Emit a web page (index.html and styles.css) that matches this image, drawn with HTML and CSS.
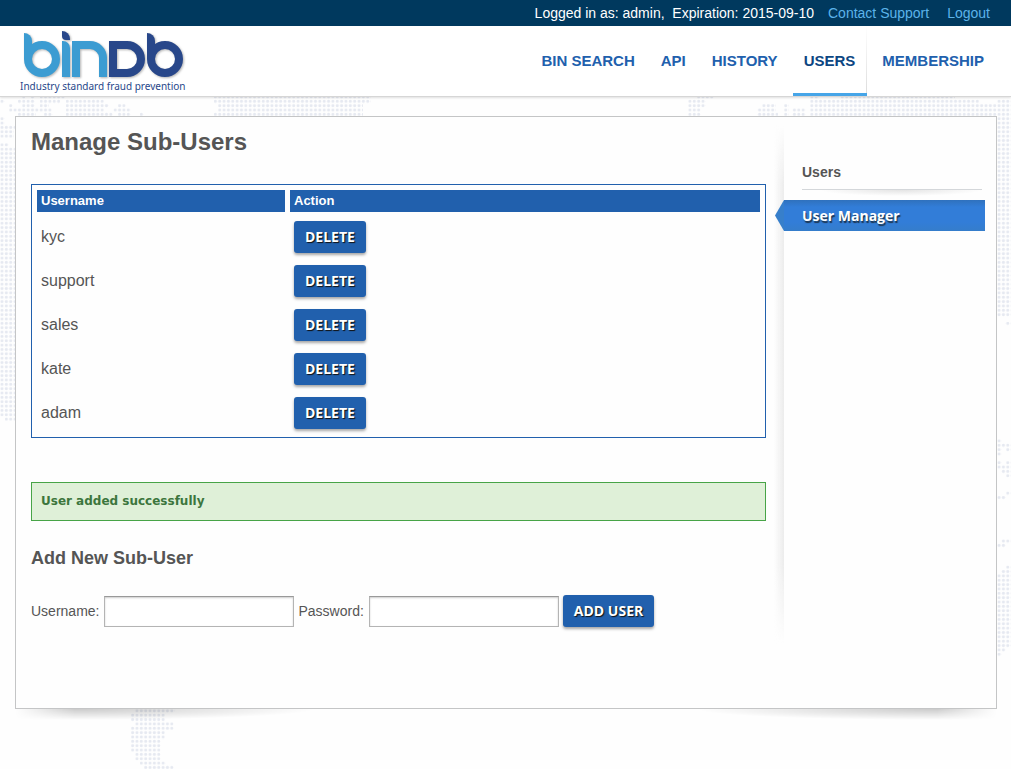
FILE: index.html
```html
<!DOCTYPE html>
<html lang="en">
<head>
<meta charset="utf-8">
<meta name="viewport" content="width=device-width, initial-scale=1">
<title>Manage Sub-Users - binDb</title>
<link rel="stylesheet" href="styles.css">
</head>
<body>
<svg class="world-map" width="1011" height="769" aria-hidden="true">
  <defs>
    <pattern id="dots" x="-0.18" y="99.12" width="4.354" height="4.354" patternUnits="userSpaceOnUse">
      <circle cx="2.177" cy="2.177" r="1.5" fill="#e6e9f1"/>
    </pattern>
  </defs>
  <path fill="url(#dots)" d="M22 95h3v4h-3zM31 95h4v4h-4zM40 95h25v4h-25zM0 99h5v5h-5zM18 99h17v5h-17zM40 99h20v5h-20zM66 99h38v5h-38zM9 104h4v4h-4zM22 104h13v4h-13zM40 104h9v4h-9zM66 104h43v4h-43zM118 104h8v4h-8zM9 108h43v4h-43zM66 108h38v4h-38zM113 108h18v4h-18zM0 117h5v4h-5zM18 112h18v5h-18zM44 112h9v5h-9zM66 112h47v5h-47zM118 112h13v5h-13zM140 112h4v5h-4zM0 121h5v4h-5zM0 125h15v5h-15zM0 130h14v4h-14zM0 134h14v4h-14zM0 143h9v4h-9zM0 147h16v270h-16zM5 417h11v4h-11z"/>
  <path fill="url(#dots)" d="M214 95h157v9h-157zM218 104h145v8h-145zM214 112h149v5h-149z"/>
  <path fill="url(#dots)" d="M697 95h17v4h-17zM688 99h18v5h-18zM688 104h18v4h-18zM688 108h13v9h-13zM762 104h14v4h-14zM757 108h19v5h-19zM784 104h5v13h-5zM757 112h21v5h-21zM792 108h14v9h-14zM810 95h9v22h-9zM840 95h115v4h-115zM819 99h160v18h-160zM979 104h18v13h-18zM997 99h14v10h-14zM997 109h14v208h-14zM1005 322h6v4h-6z"/>
  <path fill="url(#dots)" d="M997 439h5v4h-5zM997 443h14v5h-14zM997 448h5v8h-5zM1006 448h5v4h-5zM997 461h5v4h-5zM1006 461h5v4h-5zM997 465h14v5h-14zM1001 469h10v5h-10zM1006 474h5v4h-5zM1006 491h5v5h-5zM997 496h9v4h-9zM1001 539h10v5h-10zM997 543h9v5h-9zM1006 565h5v5h-5zM1001 570h10v4h-10zM997 574h14v74h-14zM997 648h9v4h-9zM997 652h5v5h-5z"/>
  <path fill="url(#dots)" d="M135 708h40v5h-40zM131 713h34v9h-34zM135 722h39v4h-39zM131 726h43v4h-43zM131 730h34v10h-34zM131 739h30v13h-30zM135 752h26v9h-26zM140 761h26v4h-26zM144 765h30v4h-30z"/>
</svg>

<header class="site-header">
  <div class="top-bar">
    <span class="account">Logged in as: admin,&nbsp; Expiration: 2015-09-10</span>
    <a href="#support">Contact Support</a>
    <a class="logout" href="#logout">Logout</a>
  </div>
  <div class="nav-bar">
    <a class="brand" href="#home">
      <span class="mark" role="img" aria-label="binDb">
        <span class="bowl light"></span>
        <span class="stroke"></span>
        <span class="arch"></span>
        <span class="half"></span>
        <span class="bowl dark"></span>
      </span>
      <span class="tagline">Industry standard fraud prevention</span>
    </a>
    <nav class="main-nav">
      <a href="#search">BIN SEARCH</a>
      <a href="#api">API</a>
      <a href="#history">HISTORY</a>
      <a class="active" href="#users" aria-current="page">USERS</a>
      <a href="#membership">MEMBERSHIP</a>
    </nav>
  </div>
</header>

<div class="panel-wrap">
  <div class="panel">
    <main class="content">
      <h1>Manage Sub-Users</h1>
      <table class="users">
        <thead>
          <tr><th class="name-col" scope="col">Username</th><th scope="col">Action</th></tr>
        </thead>
        <tbody>
          <tr><td>kyc</td><td><button class="btn" type="button">DELETE</button></td></tr>
          <tr><td>support</td><td><button class="btn" type="button">DELETE</button></td></tr>
          <tr><td>sales</td><td><button class="btn" type="button">DELETE</button></td></tr>
          <tr><td>kate</td><td><button class="btn" type="button">DELETE</button></td></tr>
          <tr><td>adam</td><td><button class="btn" type="button">DELETE</button></td></tr>
        </tbody>
      </table>
      <p class="alert" role="status">User added successfully</p>
      <h2>Add New Sub-User</h2>
      <form class="add-form">
        <label for="username">Username:</label>
        <input id="username" type="text" name="username">
        <label for="password">Password:</label>
        <input id="password" type="password" name="password">
        <button class="btn" type="submit">ADD USER</button>
      </form>
    </main>
    <aside class="sidebar">
      <h3>Users</h3>
      <a class="side-link" href="#manager">User Manager</a>
    </aside>
  </div>
</div>
</body>
</html>
```
FILE: styles.css
```css
* {
  box-sizing: border-box;
}

body {
  margin: 0;
  background: #fefefe;
  color: #555;
  font-family: "Liberation Sans", Arial, sans-serif;
  font-size: 14px;
}

a {
  text-decoration: none;
}

/* Dotted map behind the page */
.world-map {
  position: absolute;
  top: 0;
  left: 0;
  z-index: -1;
}

/* Header */
.site-header {
  background: #fff;
  border-bottom: 1px solid #d6d6d6;
  box-shadow: 0 1px 2px rgba(0, 0, 0, 0.12);
}

.top-bar {
  display: flex;
  justify-content: flex-end;
  height: 26px;
  padding-right: 21px;
  background: #00395e;
  line-height: 26px;
}

.top-bar a {
  margin-left: 14px;
  color: #5cb3ea;
}

.top-bar .logout {
  margin-left: 18px;
}

.account {
  color: #fff;
}

.nav-bar {
  display: flex;
  justify-content: space-between;
  height: 70px;
  padding: 0 16px 0 20px;
}

.brand {
  display: flex;
  flex-direction: column;
  padding-top: 15px;
}

.mark {
  display: flex;
  gap: 2px;
  height: 36px;
  margin-left: 4px;
  filter: drop-shadow(1px 1px 1px rgba(0, 0, 0, 0.3));
}

.bowl,
.arch,
.half {
  position: relative;
  width: 36px;
  border: 8px solid #3c9cd2;
}

.bowl {
  border-radius: 18px;
}

.bowl::before {
  content: "";
  position: absolute;
  top: -16px;
  left: -8px;
  width: 8px;
  height: 26px;
  border-radius: 0 8px 0 0;
  background: #3c9cd2;
}

.bowl.dark,
.half {
  border-color: #28478a;
}

.bowl.dark::before {
  background: #28478a;
}

.stroke {
  position: relative;
  width: 8px;
  border-radius: 0 7px 0 0;
  background: #3c9cd2;
}

.stroke::before {
  content: "";
  position: absolute;
  top: -10px;
  left: 0;
  width: 8px;
  height: 9px;
  border-radius: 0 8px 0 4px;
  background: #28478a;
}

.arch {
  width: 35px;
  border-bottom: 0;
  border-radius: 0 17px 0 0;
}

.half {
  border-radius: 0 18px 18px 0;
}

.tagline {
  margin-top: 2px;
  color: #28478a;
  font-family: "Noto Sans", Tahoma, sans-serif;
  font-size: 10px;
  line-height: 14px;
}

.main-nav {
  display: flex;
  gap: 4px;
}

.main-nav a {
  padding: 0 11px;
  color: #2160ad;
  font-size: 15px;
  font-weight: bold;
  line-height: 70px;
}

.main-nav .active {
  padding-right: 12px;
  border-bottom: 3px solid #46a5e8;
  background: linear-gradient(#fff, #ddd) right / 1px 100% no-repeat;
  color: #0d4682;
}

/* Page panel */
.panel-wrap {
  position: relative;
  margin: 19px 14px 60px 15px;
}

.panel-wrap::before,
.panel-wrap::after {
  content: "";
  position: absolute;
  top: 100%;
  left: 0;
  width: 300px;
  height: 12px;
  background: radial-gradient(ellipse 240px 11px at 60px 0, rgba(0, 0, 0, 0.2), transparent);
  mask-image: linear-gradient(to right, transparent, #000 60px);
}

.panel-wrap::after {
  right: 0;
  left: auto;
  transform: scaleX(-1);
}

.panel {
  display: flex;
  min-height: 593px;
  border: 1px solid #c4c5c6;
  background: #fefefe;
}

.content {
  flex: 1;
  padding: 0 18px 0 15px;
}

h1 {
  margin: 11px 0 28px;
  font-size: 24px;
  line-height: 28px;
}

.users {
  width: 100%;
  border: 1px solid #2160ad;
  border-spacing: 5px;
  table-layout: fixed;
}

.users th {
  height: 22px;
  padding: 0 4px 2px;
  background: #2160ad;
  color: #fff;
  font-size: 13px;
  text-align: left;
}

.users .name-col {
  width: 248px;
}

.users td {
  padding: 4px 4px 3px;
  font-size: 16px;
}

.btn {
  display: block;
  height: 32px;
  padding: 0 11px;
  border: 0;
  border-radius: 3px;
  background: #2160ad;
  box-shadow: 0 2px 3px rgba(0, 0, 0, 0.35);
  color: #fff;
  font-family: "Open Sans", sans-serif;
  font-size: 14px;
  font-weight: bold;
  line-height: 32px;
  text-shadow: 1px 1px 1px #111;
}

.alert {
  margin: 44px 0 26px;
  padding: 0 9px;
  border: 1px solid #47a447;
  background: #dff0d8;
  color: #3c763d;
  font-family: "DejaVu Sans", Verdana, sans-serif;
  font-size: 12px;
  font-weight: bold;
  line-height: 37px;
}

h2 {
  margin: 0 0 26px;
  font-size: 18px;
  line-height: 22px;
}

.add-form {
  display: flex;
  align-items: center;
  gap: 4px;
}

.add-form label {
  margin-right: 1px;
}

.add-form input {
  width: 190px;
  height: 31px;
  border: 1px solid #b4b4b4;
  border-top-color: #999;
  background: #fff;
  box-shadow: inset 0 1px 2px rgba(0, 0, 0, 0.2);
  font-size: 14px;
}

/* Sidebar */
.sidebar {
  position: relative;
  width: 212px;
  padding: 46px 11px 0 0;
}

.sidebar::before {
  content: "";
  position: absolute;
  top: 8px;
  bottom: 64px;
  left: -10px;
  width: 10px;
  background: linear-gradient(to right, transparent, #ececec);
  mask-image: linear-gradient(transparent, #000 60px, #000 calc(100% - 80px), transparent);
}

.sidebar h3 {
  position: relative;
  margin: 0 3px 10px 18px;
  padding-bottom: 8px;
  border-bottom: 1px solid #d4d7da;
  font-size: 14px;
  line-height: 18px;
}

.sidebar h3::after {
  content: "";
  position: absolute;
  top: 100%;
  left: 0;
  width: 100%;
  height: 6px;
  margin-top: 1px;
  background: radial-gradient(ellipse 45% 100% at 55% 0, #e4e4e4, transparent);
}

.side-link {
  position: relative;
  display: block;
  padding-left: 18px;
  background: linear-gradient(#2f71bd, #327dd8 7px, #327dd8 22px, #357dcb);
  color: #fff;
  font-family: "Open Sans", sans-serif;
  font-weight: bold;
  line-height: 31px;
  text-shadow: 1px 2px 1px #1c3550;
}

.side-link::before {
  content: "";
  position: absolute;
  top: 0;
  left: -9px;
  width: 9px;
  height: 100%;
  background: #377fcb;
  clip-path: polygon(100% 0, 0 50%, 100% 100%);
}
```
